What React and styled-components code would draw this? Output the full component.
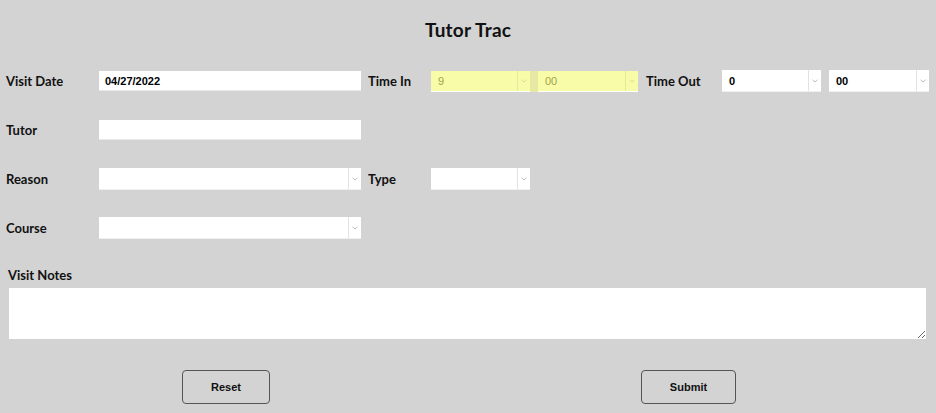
import React from 'react';
import styled, { createGlobalStyle } from "styled-components";

const Global = createGlobalStyle`
    html, body {
        margin: 0;
        background: #d3d3d3;
    }
    body {
        font-family: "Lato", "DejaVu Sans", sans-serif;
        color: #111;
    }
`;

const Page = styled.div`
    width: 936px;
    height: 413px;
    background: #d3d3d3;
    overflow: hidden;
`;

const Title = styled.h1`
    margin: 0;
    padding-top: 18px;
    height: 52px;
    box-sizing: border-box;
    text-align: center;
    font-size: 19px;
    font-weight: 700;
    letter-spacing: 0.2px;
`;

const Grid = styled.div`
    display: grid;
    grid-template-columns: 93px 262px 70px 207px 84px 207px;
    grid-template-rows: 20px 20px 20px 20px;
    row-gap: 29px;
    padding: 19px 0 0 6px;
    align-items: center;
`;

const Label = styled.label`
    font-size: 13px;
    font-weight: 700;
    padding-left: ${p => p.$indent || 0}px;
    white-space: nowrap;
`;

const TextBox = styled.input`
    box-sizing: border-box;
    width: 262px;
    height: 20px;
    border: none;
    border-bottom: 1px solid #e8e8e8;
    background: #fff;
    padding: 0 6px;
    font-family: "Liberation Sans", Arial, sans-serif;
    font-size: 11px;
    font-weight: 700;
    color: #000;
    outline: none;
`;

const Pair = styled.div`
    display: flex;
    gap: 8px;
    height: ${p => (p.$auto ? "21px" : "auto")};
    background: ${p => (p.$auto ? "#e5e9a4" : "transparent")};
`;

const SelectBox = styled.div`
    box-sizing: border-box;
    display: flex;
    align-items: stretch;
    width: ${p => p.$w}px;
    height: ${p => (p.$tall ? 22 : 21)}px;
    background: ${p => (p.$auto ? "#f8fca8" : "#fff")};
    border-bottom: 1px solid ${p => (p.$auto ? "#fff" : "#f0f0f0")};
`;

const SelectValue = styled.span`
    flex: 1;
    display: flex;
    align-items: center;
    padding: 1px 7px 0;
    font-family: "Liberation Sans", Arial, sans-serif;
    font-size: 11px;
    font-weight: ${p => (p.$auto ? 400 : 700)};
    color: ${p => (p.$auto ? "#a3a34a" : "#000")};
`;

const Arrow = styled.span`
    width: 12px;
    border-left: 1px solid ${p => (p.$auto ? "#e4e89a" : "#e2e2e2")};
    display: flex;
    align-items: center;
    justify-content: center;
`;

const Chevron = ({ auto }) => (
    <svg width="6" height="4" viewBox="0 0 6 4">
        <path d="M0.5 0.8 L3 3 L5.5 0.8" fill="none" stroke={auto ? "#d6da8c" : "#b5b5b5"} strokeWidth="0.9" />
    </svg>
);

const Select = ({ w, value, auto, tall }) => (
    <SelectBox $w={w} $auto={auto} $tall={tall}>
        <SelectValue $auto={auto}>{value}</SelectValue>
        <Arrow $auto={auto}><Chevron auto={auto} /></Arrow>
    </SelectBox>
);

const Notes = styled.div`
    padding: 29px 11px 0 8px;
`;

const NotesLabel = styled(Label)`
    display: block;
    margin-bottom: 5px;
    padding-left: 0;
`;

const TextArea = styled.textarea`
    display: block;
    box-sizing: border-box;
    width: 917px;
    height: 51px;
    margin-left: 1px;
    border: none;
    background: #fff;
    resize: vertical;
    outline: none;
`;

const Buttons = styled.div`
    display: flex;
    padding: 31px 0 0 182px;
    gap: 371px;
`;

const Button = styled.button`
    box-sizing: border-box;
    width: ${p => p.$w}px;
    height: 34px;
    background: #d3d3d3;
    border: 1px solid #555;
    border-radius: 4px;
    font-family: "Liberation Sans", Arial, sans-serif;
    font-weight: 700;
    font-size: 11px;
    color: #111;
`;

const App = () => {
    return (
        <Page>
            <Global />
            <Title>Tutor Trac</Title>
            <Grid>
                <Label>Visit Date</Label>
                <TextBox defaultValue="04/27/2022" />
                <Label $indent={7}>Time In</Label>
                <Pair $auto>
                    <Select w={99} value="9" auto />
                    <Select w={100} value="00" auto />
                </Pair>
                <Label $indent={8}>Time Out</Label>
                <Pair>
                    <Select w={99} value="0" tall />
                    <Select w={100} value="00" tall />
                </Pair>

                <Label>Tutor</Label>
                <TextBox />
                <span /><span /><span /><span />

                <Label>Reason</Label>
                <Select w={262} tall />
                <Label $indent={7}>Type</Label>
                <Select w={99} tall />
                <span /><span />

                <Label>Course</Label>
                <Select w={262} tall />
            </Grid>
            <Notes>
                <NotesLabel>Visit Notes</NotesLabel>
                <TextArea />
            </Notes>
            <Buttons>
                <Button $w={88}>Reset</Button>
                <Button $w={95}>Submit</Button>
            </Buttons>
        </Page>
    );
};

export default App;
